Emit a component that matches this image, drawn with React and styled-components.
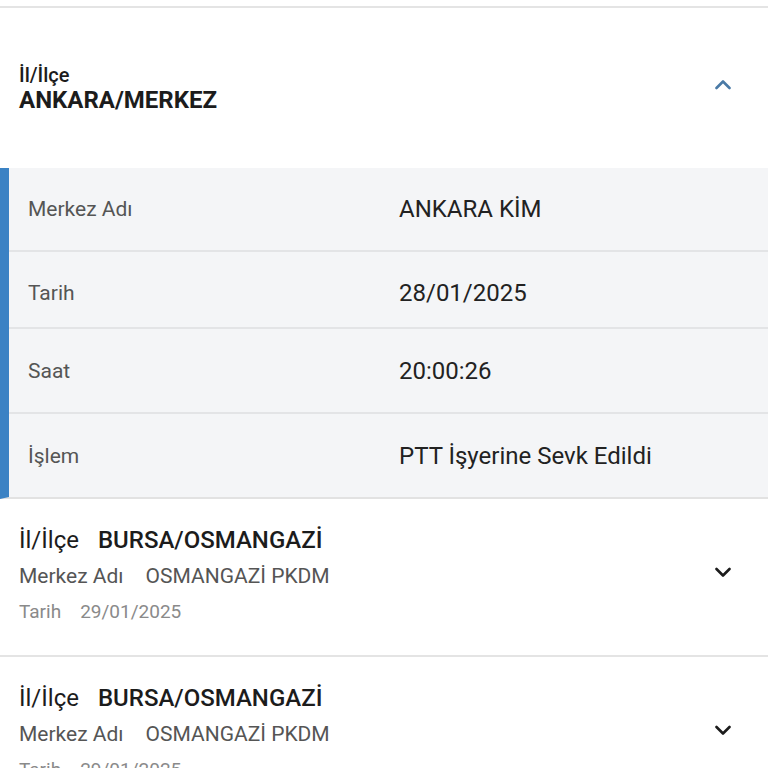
import React from "react";
import styled, { createGlobalStyle } from "styled-components";

const Global = createGlobalStyle`
  html, body { margin: 0; padding: 0; background: #ffffff; }
  body { font-family: Roboto, "Noto Sans", sans-serif; }
  * { box-sizing: border-box; }
`;

const Page = styled.div`
  width: 768px;
  height: 768px;
  overflow: hidden;
  background: #fff;
  padding-top: 6px;
`;

const TopRule = styled.div`
  height: 2px;
  background: #e4e4e4;
`;

const OpenHeader = styled.div`
  display: flex;
  align-items: center;
  justify-content: space-between;
  height: 160px;
  padding: 0 37px 0 19px;
`;

const HeaderText = styled.div`
  display: flex;
  flex-direction: column;
`;

const HeaderLabel = styled.div`
  font-size: 20px;
  font-weight: 500;
  color: #1c1c1c;
  line-height: 24px;
`;

const HeaderValue = styled.div`
  font-size: 24px;
  font-weight: 700;
  color: #1c1c1c;
  line-height: 27px;
`;

const ChevronBox = styled.div`
  display: flex;
  margin-top: ${(p) => p.$mt || 0}px;
`;

const Detail = styled.div`
  background: #f4f5f7;
  border-left: 9px solid #3b82c4;
  border-bottom: 2px solid #e2e2e2;
`;

const DetailRow = styled.div`
  display: grid;
  grid-template-columns: 371px 1fr;
  align-items: center;
  height: ${(p) => p.$h}px;
  padding-left: 19px;
  padding-top: ${(p) => p.$pt || 0}px;
  border-top: ${(p) => (p.$first ? "none" : "2px solid #e3e4e6")};
`;

const DetailLabel = styled.div`
  font-size: 21px;
  color: #555;
`;

const DetailValue = styled.div`
  font-size: 24px;
  color: #222;
`;

const Item = styled.div`
  display: flex;
  align-items: center;
  justify-content: space-between;
  height: ${(p) => p.$h}px;
  padding: 0 37px 0 19px;
  border-bottom: 2px solid #e4e4e4;
`;

const ItemText = styled.div`
  display: flex;
  flex-direction: column;
  margin-top: ${(p) => p.$mt}px;
  align-self: flex-start;
`;

const ItemTitle = styled.div`
  font-size: 24px;
  color: #1c1c1c;
  line-height: 26px;
  display: flex;
  gap: 19px;
  & > b {
    font-weight: 500;
  }
`;

const ItemLine = styled.div`
  font-size: ${(p) => p.$size}px;
  color: ${(p) => p.$color};
  line-height: ${(p) => p.$lh}px;
  margin-top: ${(p) => p.$mt}px;
  display: flex;
  gap: ${(p) => p.$gap}px;
`;

const Chevron = ({ up, color }) => (
  <svg width="16" height="11" viewBox="0 0 16 11">
    <path
      d={up ? "M1.5 9 L8 2.5 L14.5 9" : "M1.5 2 L8 8.5 L14.5 2"}
      fill="none"
      stroke={color}
      strokeWidth="2.6"
      strokeLinecap="round"
      strokeLinejoin="round"
    />
  </svg>
);

const rows = [
  { label: "Merkez Adı", value: "ANKARA KİM", h: 82 },
  { label: "Tarih", value: "28/01/2025", h: 77, pt: 6 },
  { label: "Saat", value: "20:00:26", h: 85, pt: -2 },
  { label: "İşlem", value: "PTT İşyerine Sevk Edildi", h: 85 },
];

export default function App() {
  return (
    <>
      <Global />
      <Page>
        <TopRule />
        <OpenHeader>
          <HeaderText>
            <HeaderLabel>İl/İlçe</HeaderLabel>
            <HeaderValue>ANKARA/MERKEZ</HeaderValue>
          </HeaderText>
          <ChevronBox $mt={-8}>
            <Chevron up color="#4a7aa6" />
          </ChevronBox>
        </OpenHeader>
        <Detail>
          {rows.map((r, i) => (
            <DetailRow key={r.label} $h={r.h} $pt={r.pt} $first={i === 0}>
              <DetailLabel>{r.label}</DetailLabel>
              <DetailValue>{r.value}</DetailValue>
            </DetailRow>
          ))}
        </Detail>
        {[0, 1].map((k) => (
          <Item key={k} $h={158}>
            <ItemText $mt={28}>
              <ItemTitle>
                <span>İl/İlçe</span>
                <b>BURSA/OSMANGAZİ</b>
              </ItemTitle>
              <ItemLine $size={21} $color="#555" $lh={24} $gap={22} $mt={11}>
                <span>Merkez Adı</span>
                <span>OSMANGAZİ PKDM</span>
              </ItemLine>
              <ItemLine $size={19} $color="#8a8a8a" $lh={22} $gap={19} $mt={13}>
                <span>Tarih</span>
                <span>29/01/2025</span>
              </ItemLine>
            </ItemText>
            <ChevronBox $mt={-10}>
              <Chevron color="#1c1c1c" />
            </ChevronBox>
          </Item>
        ))}
      </Page>
    </>
  );
}
